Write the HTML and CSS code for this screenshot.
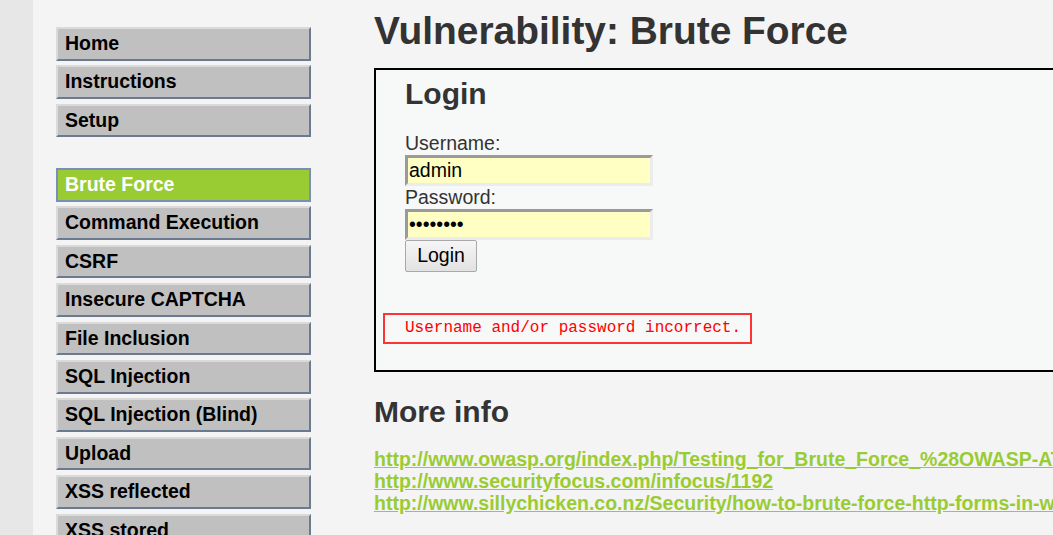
FILE: index.html
```html
<!DOCTYPE html>
<html>
<head>
<meta charset="utf-8">
<title>Vulnerability: Brute Force</title>
<link rel="stylesheet" href="styles.css">
</head>
<body>
<div class="page">
  <div class="strip"></div>
  <nav class="sidebar">
    <ul class="menu">
      <li><a href="#">Home</a></li>
      <li><a href="#">Instructions</a></li>
      <li><a href="#">Setup</a></li>
    </ul>
    <ul class="menu">
      <li class="selected"><a href="#">Brute Force</a></li>
      <li><a href="#">Command Execution</a></li>
      <li><a href="#">CSRF</a></li>
      <li><a href="#">Insecure CAPTCHA</a></li>
      <li><a href="#">File Inclusion</a></li>
      <li><a href="#">SQL Injection</a></li>
      <li><a href="#">SQL Injection (Blind)</a></li>
      <li><a href="#">Upload</a></li>
      <li><a href="#">XSS reflected</a></li>
      <li><a href="#">XSS stored</a></li>
    </ul>
  </nav>
  <main class="main">
    <h1 class="title">Vulnerability: Brute Force</h1>
    <div class="vuln">
      <form class="login">
        <h2 class="login-title">Login</h2>
        <label class="field-label">Username:</label>
        <input class="field" type="text" value="admin">
        <label class="field-label">Password:</label>
        <input class="field" type="password" value="password">
        <button class="btn" type="button">Login</button>
      </form>
      <pre class="error">Username and/or password incorrect.</pre>
    </div>
    <h2 class="more">More info</h2>
    <ul class="links">
      <li><a href="#">http://www.owasp.org/index.php/Testing_for_Brute_Force_%28OWASP-AT-004%29</a></li>
      <li><a href="#">http://www.securityfocus.com/infocus/1192</a></li>
      <li><a href="#">http://www.sillychicken.co.nz/Security/how-to-brute-force-http-forms-in-windows.html</a></li>
    </ul>
  </main>
</div>
</body>
</html>
```

FILE: styles.css
```css
html, body {
  margin: 0;
  padding: 0;
  overflow: hidden;
}

body {
  background: #f4f4f4;
  font-family: "Liberation Sans", Arial, sans-serif;
  color: #333;
  width: 1053px;
  height: 535px;
}

.page {
  display: flex;
  align-items: stretch;
  min-height: 535px;
  white-space: nowrap;
}

.strip {
  flex: 0 0 33px;
  background: #e7e7e7;
}

.sidebar {
  flex: 0 0 255px;
  padding: 27px 0 0 23px;
}

.menu {
  list-style: none;
  margin: 0 0 30.8px 0;
  padding: 0;
}

.menu li {
  margin-bottom: 4.9px;
}

.menu a {
  display: block;
  box-sizing: border-box;
  height: 33.5px;
  padding-left: 7px;
  line-height: 29.5px;
  font-size: 19.5px;
  font-weight: bold;
  color: #000;
  text-decoration: none;
  background: #c0c0c0;
  border-top: 2px solid #dadada;
  border-left: 2px solid #dadada;
  border-right: 2px solid #6b7a8f;
  border-bottom: 2px solid #6b7a8f;
}

.menu .selected a {
  background: #99cc33;
  color: #fff;
  border: 2px solid #7b8fb6;
}

.main {
  flex: 0 0 auto;
  margin-left: 63px;
}

.title {
  margin: 8.6px 0 15.4px 0;
  font-size: 38.9px;
  font-weight: bold;
  color: #333;
  line-height: 44px;
}

.vuln {
  width: 720px;
  background: #f7f8f8;
  border: 2px solid #000;
  padding: 0 0 26px 29px;
}

.login {
  display: flex;
  flex-direction: column;
  align-items: flex-start;
  margin: 0;
}

.login-title {
  margin: 6px 0 20px 0;
  font-size: 30px;
  line-height: 36px;
  font-weight: bold;
  color: #333;
}

.field-label {
  font-size: 19.5px;
  line-height: 23px;
  color: #333;
}

.field {
  box-sizing: border-box;
  width: 248px;
  height: 31px;
  margin: 0;
  padding: 1px 1px;
  font-family: "Liberation Sans", Arial, sans-serif;
  font-size: 19.5px;
  color: #000;
  background: #ffffc4;
  border-top: 3px solid #9a9a9a;
  border-left: 3px solid #9a9a9a;
  border-right: 3px solid #ececec;
  border-bottom: 3px solid #ececec;
  outline: none;
}

.btn {
  box-sizing: border-box;
  width: 72px;
  height: 32px;
  margin: 0;
  padding: 0;
  font-family: "Liberation Sans", Arial, sans-serif;
  font-size: 19.5px;
  color: #000;
  background: linear-gradient(#f5f5f5, #e2e2e2);
  border: 1px solid #a9a9a9;
  border-radius: 2px;
}

.error {
  display: inline-block;
  margin: 41px 0 0 -22px;
  padding: 0 9px 0 20px;
  border: 2px solid #ff3333;
  font-family: "Liberation Mono", "Courier New", monospace;
  font-size: 16px;
  line-height: 27px;
  color: #ff0000;
}

.more {
  margin: 23px 0 19px 0;
  font-size: 30px;
  line-height: 34px;
  font-weight: bold;
  color: #333;
}

.links {
  list-style: none;
  margin: 0;
  padding: 0;
}

.links li {
  font-size: 19.5px;
  line-height: 22px;
  font-weight: bold;
}

.links a {
  color: #99cc33;
  text-decoration: underline;
}
```
